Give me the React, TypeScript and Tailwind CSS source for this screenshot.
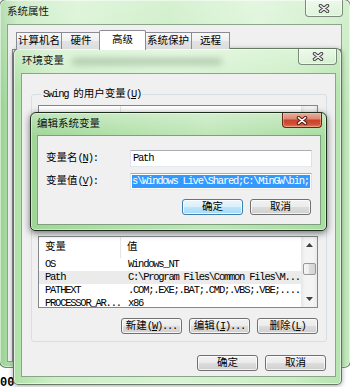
import React from "react";

const CJK = /[\u2E80-\u9FFF\uF900-\uFAFF\uFF00-\uFFEF\u3000-\u303F]/;

function T({ s }: { s: string }) {
  const out: React.ReactNode[] = [];
  let buf = "";
  let cjk: boolean | null = null;
  let key = 0;
  const flush = () => {
    if (!buf) return;
    if (cjk) {
      out.push(<span key={key++}>{buf}</span>);
    } else {
      const parts = buf.split(/&(.)/);
      out.push(
        <span key={key++} className="tracking-[-1.25px]">
          {parts.map((p, i) => (i % 2 === 1 ? <u key={i} className="underline-offset-[1px]">{p}</u> : p))}
        </span>
      );
    }
    buf = "";
  };
  for (const ch of s) {
    const c = CJK.test(ch);
    if (cjk !== null && c !== cjk) flush();
    cjk = c;
    buf += ch;
  }
  flush();
  return <>{out}</>;
}

function XGlyph({ red }: { red?: boolean }) {
  return (
    <svg width="12" height="9" viewBox="0 0 12 9">
      <path d="M2.5 1.6L9.5 7.4M9.5 1.6L2.5 7.4" stroke={red ? "#4a1208" : "#3c3c3c"} strokeWidth="3.4" strokeLinecap="round" />
      <path d="M2.5 1.6L9.5 7.4M9.5 1.6L2.5 7.4" stroke={red ? "#ffffff" : "#ececec"} strokeWidth="1.6" strokeLinecap="round" />
    </svg>
  );
}

function CloseInactive({ className }: { className: string }) {
  return (
    <div
      className={`${className} flex items-center justify-center rounded-b-[4px] border border-t-0 border-[#4d5e4d]/70 bg-[linear-gradient(rgba(255,255,255,0.55),rgba(255,255,255,0.2))] shadow-[inset_0_0_0_1px_rgba(255,255,255,0.55)]`}
    >
      <XGlyph />
    </div>
  );
}

function Btn({ label, def }: { label: string; def?: boolean }) {
  return (
    <div
      className={`flex h-[16px] w-[61px] items-center justify-center rounded-[3px] border whitespace-nowrap leading-none shadow-[inset_0_0_0_1px_rgba(255,255,255,0.75)] ${
        def
          ? "border-[#3c7fb1] bg-[linear-gradient(#eaf6fd,#d9f0fc_50%,#bee6fd_50%,#a7d9f5)]"
          : "border-[#707070] bg-[linear-gradient(#f2f2f2,#ebebeb_50%,#dddddd_50%,#cfcfcf)]"
      }`}
    >
      <T s={label} />
    </div>
  );
}

function Tri({ down }: { down?: boolean }) {
  return (
    <svg width="7" height="4" viewBox="0 0 7 4">
      <polygon points={down ? "0,0 7,0 3.5,4" : "0,4 7,4 3.5,0"} fill="#3f3f3f" />
    </svg>
  );
}

function ListView({ rows, h, empty }: { rows: [string, string, boolean?][]; h: string; empty?: boolean }) {
  return (
    <div className={`flex w-[280px] ${h} overflow-hidden border border-[#828790] bg-white`}>
      <div className="flex flex-1 flex-col overflow-hidden">
        <div className="flex h-[21px] shrink-0">
          <div className="flex w-[82px] items-center border-r border-[#e5e5e5] pl-[6px]">{empty ? null : <T s="变量" />}</div>
          <div className="flex flex-1 items-center pl-[6px]">{empty ? null : <T s="值" />}</div>
        </div>
        {rows.map(([a, b, sel], i) => (
          <div key={i} className={`flex h-[13px] shrink-0 leading-[13px] ${sel ? "bg-[#ebebeb]" : ""}`}>
            <div className="w-[82px] overflow-hidden whitespace-nowrap pl-[6px]">
              <T s={a} />
            </div>
            <div className="flex-1 overflow-hidden whitespace-nowrap pl-[7px]">
              <T s={b} />
            </div>
          </div>
        ))}
      </div>
      <div className="flex w-[16px] flex-col items-center bg-[linear-gradient(90deg,#e6e6e6,#f4f4f4_25%,#f4f4f4_75%,#eaeaea)]">
        <div className="flex h-[16px] items-center justify-center">
          <Tri />
        </div>
        <div className="mt-[10px] h-[12px] w-[13px] rounded-[2px] border border-[#979797] bg-[linear-gradient(90deg,#f6f6f6,#ebebeb_50%,#dcdcdc_50%,#d4d4d4)]" />
        <div className="flex-1" />
        <div className="flex h-[16px] items-center justify-center">
          <Tri down />
        </div>
      </div>
    </div>
  );
}

function Tab({ label, w, sel, ml }: { label: string; w: string; sel?: boolean; ml: string }) {
  return (
    <div
      className={`${w} ${ml} flex items-center justify-center border border-b-0 border-[#898c95] ${
        sel
          ? "relative z-10 h-[20px] rounded-t-[2px] bg-white"
          : "mb-px h-[17px] bg-[linear-gradient(#f7f7f7,#efefef_50%,#e3e3e3_50%,#dcdcdc)]"
      }`}
    >
      <T s={label} />
    </div>
  );
}

export default function App() {
  return (
    <div className="relative h-[387px] w-[350px] overflow-hidden bg-white font-['Liberation_Mono','Noto_Sans_CJK_SC',monospace] text-[10.5px] leading-[13px] text-black">
      {/* desktop text */}
      <span className="absolute left-[0px] top-[377px] text-[12px] font-bold">00</span>

      {/* Window 1: 系统属性 */}
      <div className="absolute left-[-1px] top-[-1px] flex h-[369px] w-[352px] flex-col rounded-[7px] border border-[#3b4b3b]/60 bg-[linear-gradient(rgba(255,255,255,0.3),rgba(255,255,255,0)_30%),linear-gradient(90deg,#98d192_0%,#bfe7b8_5%,#d3f1cd_22%,#c4ebbd_48%,#d8f3d3_74%,#c2e9bb_100%)] shadow-[inset_0_0_0_1px_rgba(255,255,255,0.5)]">
        <div className="relative flex h-[24px] shrink-0 items-center pl-[7px]">
          <span className="text-[#151515]">
            <T s="系统属性" />
          </span>
          <CloseInactive className="absolute right-[7px] top-0 h-[17px] w-[38px]" />
        </div>
        <div className="mb-[5px] ml-[7px] mr-[8px] flex flex-1 flex-col overflow-hidden border border-[#8aa58a] bg-[#f0f0f0]">
          <div className="pl-[4px] pt-[5px]">
            <div className="relative z-10 flex h-[20px] items-end pl-[4px]">
              <Tab label="计算机名" w="w-[46px]" ml="ml-0" />
              <Tab label="硬件" w="w-[40px]" ml="-ml-px" />
              <Tab label="高级" w="w-[47px]" ml="-ml-[2px]" sel />
              <Tab label="系统保护" w="w-[48px]" ml="-ml-[2px]" />
              <Tab label="远程" w="w-[39px]" ml="-ml-px" />
            </div>
            <div className="-mt-px h-[400px] border border-[#898c95] bg-white" />
          </div>
        </div>
      </div>

      {/* Window 2: 环境变量 */}
      <div className="absolute left-[13px] top-[48px] flex h-[337px] w-[329px] flex-col rounded-b-[5px] rounded-t-[6px] border border-[#384838]/70 bg-[linear-gradient(rgba(255,255,255,0.35),rgba(255,255,255,0)_12%),linear-gradient(90deg,#b0e1a8_0%,#cdeec7_12%,#d8f3d3_50%,#caedc3_86%,#b6e4af_100%)] shadow-[0_1px_5px_rgba(0,0,0,0.35),inset_0_0_0_1px_rgba(255,255,255,0.55)]">
        <div className="relative flex h-[24px] shrink-0 items-center pl-[8px]">
          <span className="relative z-10 text-[#151515]">
            <T s="环境变量" />
          </span>
          <div className="absolute left-[58px] top-[9px] h-[7px] w-[150px] rounded-full bg-[#4f6f4f]/30 blur-[3px]" />
          <CloseInactive className="absolute right-[4px] top-0 h-[16px] w-[39px]" />
        </div>
        <div className="mb-[7px] ml-[7px] mr-[5px] flex flex-1 flex-col border border-[#8aa58a] bg-[#f0f0f0]">
          <fieldset className="ml-[9px] mt-[14px] w-[296px] rounded-[3px] border border-[#d5dfe5] pb-[7px] pl-[6px]">
            <legend className="ml-[4px] px-[1px] leading-[13px]">
              <T s="Swing 的用户变量(&U)" />
            </legend>
            <div className="mt-[4px]">
              <ListView rows={[]} h="h-[78px]" empty />
            </div>
            <div className="mt-[8px] h-[16px] w-[280px]" />
          </fieldset>
          <fieldset className="ml-[9px] mt-[1px] w-[296px] rounded-[3px] border border-[#d5dfe5] pb-[7px] pl-[6px]">
            <div className="mt-[19px]">
              <ListView
                rows={[
                  ["OS", "Windows_NT"],
                  ["Path", "C:\\Program Files\\Common Files\\M...", true],
                  ["PATHEXT", ".COM;.EXE;.BAT;.CMD;.VBS;.VBE;...."],
                  ["PROCESSOR_AR...", "x86"],
                ]}
                h="h-[72px]"
              />
            </div>
            <div className="mt-[10px] flex w-[280px] justify-end gap-[7px]">
              <Btn label="新建(&W)..." />
              <Btn label="编辑(&I)..." />
              <Btn label="删除(&L)" />
            </div>
          </fieldset>
          <div className="mt-[13px] flex justify-end gap-[7px] pr-[9px]">
            <Btn label="确定" />
            <Btn label="取消" />
          </div>
        </div>
      </div>

      {/* Window 3: 编辑系统变量 (active) */}
      <div className="absolute left-[30px] top-[112px] flex h-[119px] w-[297px] flex-col rounded-b-[5px] rounded-t-[6px] border border-[#1e2e1e] bg-[linear-gradient(rgba(255,255,255,0.35),rgba(255,255,255,0)_20%),linear-gradient(90deg,#9fd697_0%,#b0e0a8_30%,#bde6b6_60%,#a9dca1_100%)] shadow-[0_2px_7px_rgba(0,0,0,0.55),inset_0_0_0_1px_rgba(255,255,255,0.45)]">
        <div className="relative flex h-[22px] shrink-0 items-center pl-[6px]">
          <span className="text-[#101010]">
            <T s="编辑系统变量" />
          </span>
          <div className="absolute right-[4px] top-0 flex h-[15px] w-[40px] items-center justify-center rounded-b-[4px] border border-t-0 border-[#6b2518] bg-[linear-gradient(#eaae9f,#dc8a74_40%,#c7442b_52%,#cf5134_80%,#de8363)] shadow-[inset_0_0_0_1px_rgba(255,200,180,0.45)]">
            <XGlyph red />
          </div>
        </div>
        <div className="mb-[5px] ml-[6px] mr-[5px] flex-1 border border-[#7fa07f] bg-[#f0f0f0]">
          <div className="grid grid-cols-[84px_182px] items-center gap-y-[6px] pl-[8px] pt-[14px]">
            <div>
              <T s="变量名(&N):" />
            </div>
            <div className="flex h-[17px] items-center overflow-hidden whitespace-nowrap border border-[#abadb3] border-b-[#e3e9ef] border-l-[#e2e3ea] border-r-[#dbdfe6] bg-white pl-[2px]">
              <T s="Path" />
            </div>
            <div>
              <T s="变量值(&V):" />
            </div>
            <div className="h-[17px] overflow-hidden border border-[#abadb3] border-b-[#e3e9ef] border-l-[#e2e3ea] border-r-[#dbdfe6] bg-white p-px">
              <div className="flex h-full items-center overflow-hidden whitespace-nowrap bg-[#3399ff] text-white">
                <T s={"s\\Windows Live\\Shared;C:\\MinGW\\bin;"} />
              </div>
            </div>
          </div>
          <div className="mt-[9px] flex justify-end gap-[7px] pr-[9px]">
            <Btn label="确定" def />
            <Btn label="取消" />
          </div>
        </div>
      </div>
    </div>
  );
}
